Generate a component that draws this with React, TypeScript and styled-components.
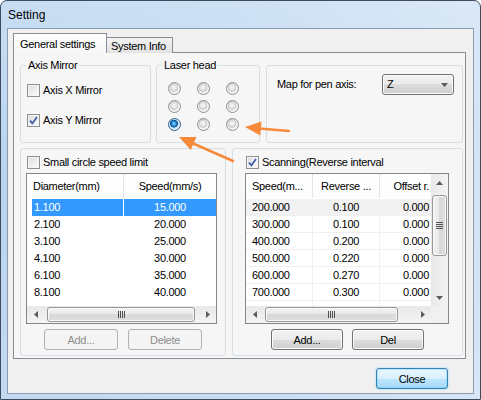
import React from 'react';
import styled, { createGlobalStyle, css } from 'styled-components';

const GlobalStyle = createGlobalStyle`
  html, body { margin: 0; padding: 0; background: #fff; }
  body {
    font-family: "Liberation Sans", Arial, sans-serif;
    font-size: 11px;
    letter-spacing: -0.3px;
    color: #000;
  }
  * { box-sizing: border-box; }
`;

const Screen = styled.div`
  position: relative;
  width: 481px;
  height: 400px;
  overflow: hidden;
`;

const Window = styled.div`
  width: 481px;
  height: 400px;
  border: 1px solid #3d4b5c;
  border-radius: 7px 7px 0 0;
  background:
    linear-gradient(to right, rgba(255,255,255,0) 0%, rgba(255,255,255,0.12) 50%, rgba(255,255,255,0.35) 100%),
    linear-gradient(#c7ddf3, #bad4ef 45%, #c3d9f1);
  display: flex;
  flex-direction: column;
`;

const TitleBar = styled.div`
  height: 27px;
  padding: 1px 0 0 7px;
  display: flex;
  align-items: center;
  font-size: 12px;
  letter-spacing: 0;
`;

const Client = styled.div`
  flex: 1;
  margin: 0 6px 5px 6px;
  border: 1px solid #8c9db1;
  background: #f0f0f0;
  padding: 4px 7px 0 5px;
  display: flex;
  flex-direction: column;
`;

const TabStrip = styled.div`
  height: 20px;
  display: flex;
  align-items: flex-end;
  position: relative;
  z-index: 1;
`;

const Tab = styled.div<{ $active?: boolean }>`
  border: 1px solid #898c95;
  border-bottom: none;
  display: flex;
  align-items: center;
  white-space: nowrap;
  ${p => p.$active
    ? css`
        width: 94px;
        height: 20px;
        padding: 0 0 0 6px;
        background: linear-gradient(#ffffff, #f6f6f6);
      `
    : css`
        width: 67px;
        height: 16px;
        margin-left: -1px;
        padding: 0 0 0 4px;
        background: linear-gradient(#f3f3f3, #e2e2e2);
      `}
`;

const Panel = styled.div`
  height: 307px;
  margin-top: -1px;
  border: 1px solid #898c95;
  background: #f6f6f6;
  padding: 6px 2px 0 6px;
  display: flex;
  flex-direction: column;
`;

const TopRow = styled.div`
  height: 84px;
  display: flex;
  gap: 5px;
`;

const GroupSet = styled.fieldset<{ $w: number }>`
  margin: 0;
  padding: 0;
  min-width: 0;
  width: ${p => p.$w}px;
  border: 1px solid #d5dfe5;
  border-radius: 3px;
`;

const Legend = styled.legend`
  margin-left: 5px;
  padding: 0 2px;
  line-height: 13px;
`;

const MirrorList = styled.div`
  display: flex;
  flex-direction: column;
  gap: 17px;
  padding: 12px 0 0 6px;
`;

const CheckRow = styled.label<{ $indent?: number }>`
  display: flex;
  align-items: center;
  gap: 3px;
  height: 13px;
  line-height: 13px;
  margin-left: ${p => p.$indent ?? 0}px;
  white-space: nowrap;
`;

const CheckBox = styled.span`
  width: 13px;
  height: 13px;
  flex: none;
  border: 1px solid #8e8f8f;
  background: linear-gradient(135deg, #d9dbde 0%, #eef0f2 60%, #fbfbfb 100%);
  box-shadow: inset 0 0 0 1px #f5f5f5;
  display: flex;
  align-items: center;
  justify-content: center;
`;

const RadioGrid = styled.div`
  display: grid;
  grid-template-columns: repeat(3, 13px);
  column-gap: 16px;
  row-gap: 5px;
  padding: 10px 0 0 11px;
`;

const Radio = styled.span<{ $on?: boolean }>`
  width: 13px;
  height: 13px;
  border-radius: 50%;
  border: 1px solid ${p => (p.$on ? '#2c628b' : '#8f8f8f')};
  background: ${p => p.$on
    ? 'radial-gradient(circle at 45% 42%, #9fdcff 0%, #2b98e6 22%, #0b4a86 42%, #cfe6f6 48%, #f4f9fd 100%)'
    : 'radial-gradient(circle at 45% 40%, #fafafa 0%, #e2e2e2 30%, #c6c6c6 46%, #eeeeee 50%, #ffffff 100%)'};
`;

const MapBox = styled.div`
  flex: 1;
  margin: 6px 0 0 1px;
  border: 1px solid #d5dfe5;
  border-radius: 3px;
  padding: 8px 8px 0 10px;
  display: flex;
  align-items: flex-start;
  justify-content: space-between;
  line-height: 21px;
`;

const Select = styled.div`
  width: 72px;
  height: 21px;
  border: 1px solid #707070;
  border-radius: 3px;
  background: linear-gradient(#f2f2f2, #ebebeb 50%, #dddddd 50%, #cfcfcf);
  box-shadow: inset 0 0 0 1px #fbfbfb;
  display: flex;
  align-items: center;
  justify-content: space-between;
  padding: 0 5px 0 4px;
`;

const BottomRow = styled.div`
  height: 208px;
  margin-top: 5px;
  display: flex;
  gap: 6px;
`;

const Group = styled.div<{ $w?: number }>`
  ${p => (p.$w ? css`width: ${p.$w}px;` : css`flex: 1;`)}
  border: 1px solid #d5dfe5;
  border-radius: 3px;
  padding-top: 7px;
  display: flex;
  flex-direction: column;
`;

const ListFrame = styled.div<{ $w: number; $ml: number; $grid?: boolean }>`
  width: ${p => p.$w}px;
  height: 151px;
  margin: 4px 0 0 ${p => p.$ml}px;
  border: 1px solid #828790;
  background: #fff;
  ${p => p.$grid
    ? css`
        display: grid;
        grid-template-columns: 1fr 17px;
        grid-template-rows: 1fr 17px;
      `
    : css`
        display: flex;
        flex-direction: column;
      `}
`;

const ListMain = styled.div`
  display: flex;
  flex-direction: column;
  min-width: 0;
  overflow: hidden;
`;

const Header = styled.div`
  height: 24px;
  flex: none;
  display: flex;
  background: linear-gradient(#ffffff, #fbfcfc);
`;

const HeadCell = styled.div<{ $w?: number; $align?: string; $pad?: string }>`
  ${p => (p.$w ? css`width: ${p.$w}px; flex: none;` : css`flex: 1;`)}
  text-align: ${p => p.$align ?? 'left'};
  padding: ${p => p.$pad ?? '0'};
  line-height: 24px;
  border-right: 1px solid #e5e5e5;
  white-space: nowrap;
  overflow: hidden;
  &:last-child { border-right: none; }
`;

const Rows = styled.div`
  flex: 1;
  padding-top: 1px;
  overflow: hidden;
`;

const SpeedRow = styled.div<{ $selected?: boolean }>`
  height: 17px;
  margin-left: 5px;
  display: flex;
  gap: 1px;
  line-height: 17px;
  color: ${p => (p.$selected ? '#fff' : '#000')};
  & > div { background: ${p => (p.$selected ? '#3399ff' : 'transparent')}; }
`;

const Cell = styled.div<{ $w?: number; $align?: string; $pad?: string }>`
  ${p => (p.$w ? css`width: ${p.$w}px; flex: none;` : css`flex: 1;`)}
  text-align: ${p => p.$align ?? 'left'};
  padding: ${p => p.$pad ?? '0'};
  white-space: nowrap;
`;

const ScanRow = styled.div<{ $hover?: boolean }>`
  height: 17px;
  display: flex;
  line-height: 16px;
  border-bottom: 1px solid #f0f0f0;
  background: ${p => (p.$hover ? '#f2f2f2' : '#fff')};
  & > div { border-right: 1px solid #f0f0f0; }
  & > div:last-child { border-right: none; }
`;

const HBar = styled.div`
  height: 17px;
  flex: none;
  display: flex;
  background: linear-gradient(#e8e8e8, #f4f4f4);
`;

const VBar = styled.div`
  display: flex;
  flex-direction: column;
  background: linear-gradient(to right, #e8e8e8, #f4f4f4);
`;

const ArrowBtn = styled.div`
  width: 17px;
  height: 17px;
  flex: none;
  display: flex;
  align-items: center;
  justify-content: center;
`;

const Track = styled.div<{ $vertical?: boolean }>`
  flex: 1;
  display: flex;
  flex-direction: ${p => (p.$vertical ? 'column' : 'row')};
`;

const Thumb = styled.div<{ $vertical?: boolean; $offset: number; $size: number }>`
  border: 1px solid #979797;
  border-radius: 3px;
  display: flex;
  align-items: center;
  justify-content: center;
  box-shadow: inset 0 0 0 1px #f9f9f9;
  ${p => p.$vertical
    ? css`
        margin: ${p.$offset}px 1px 0 1px;
        height: ${p.$size}px;
        background: linear-gradient(to right, #f3f3f3, #e8e8e8 50%, #d8d8d8 50%, #dedede);
      `
    : css`
        margin: 1px 0 1px ${p.$offset}px;
        width: ${p.$size}px;
        background: linear-gradient(#f3f3f3, #e8e8e8 50%, #d8d8d8 50%, #dedede);
      `}
`;

const Corner = styled.div`
  background: #f0f0f0;
`;

const ButtonRow = styled.div<{ $gap: number }>`
  display: flex;
  justify-content: center;
  gap: ${p => p.$gap}px;
  margin-top: 5px;
`;

const Button = styled.button<{ $w: number; $default?: boolean }>`
  width: ${p => p.$w}px;
  height: 21px;
  padding: 0;
  font-family: inherit;
  font-size: 11px;
  letter-spacing: -0.3px;
  color: #000;
  border: 1px solid #707070;
  border-radius: 3px;
  background: linear-gradient(#f2f2f2, #ebebeb 50%, #dddddd 50%, #cfcfcf);
  box-shadow: inset 0 0 0 1px #fcfcfc;
  &:disabled {
    color: #8d8d8d;
    border-color: #adb2b5;
    background: #f4f4f4;
    box-shadow: none;
  }
  ${p => p.$default && css`
    border-color: #3c7fb1;
    background: linear-gradient(#eaf6fd, #d9f0fc 50%, #bee6fd 50%, #a7d9f5);
    box-shadow: inset 0 0 0 1px #48d3fb55, 0 0 2px #7fd0f7;
  `}
`;

const Footer = styled.div`
  display: flex;
  justify-content: flex-end;
  padding-right: 18px;
  margin-top: 9px;
`;

const Overlay = styled.svg`
  position: absolute;
  left: 0;
  top: 0;
  pointer-events: none;
`;

const Tri = ({ dir }: { dir: 'left' | 'right' | 'up' | 'down' }) => {
  const pts = {
    left: '4,0 4,7 0,3.5',
    right: '0,0 0,7 4,3.5',
    up: '0,4 7,4 3.5,0',
    down: '0,0 7,0 3.5,4',
  }[dir];
  const w = dir === 'left' || dir === 'right' ? 4 : 7;
  const h = dir === 'left' || dir === 'right' ? 7 : 4;
  return (
    <svg width={w} height={h} viewBox={`0 0 ${w} ${h}`}>
      <polygon points={pts} fill="#5b5b5b" />
    </svg>
  );
};

const Grip = ({ vertical }: { vertical?: boolean }) =>
  vertical ? (
    <svg width="7" height="7" viewBox="0 0 7 7">
      {[0, 2, 4, 6].map(y => (
        <rect key={y} x="0" y={y} width="7" height="1" fill="#4f4f4f" />
      ))}
    </svg>
  ) : (
    <svg width="7" height="7" viewBox="0 0 7 7">
      {[0, 2, 4, 6].map(x => (
        <rect key={x} x={x} y="0" width="1" height="7" fill="#4f4f4f" />
      ))}
    </svg>
  );

const HScroll = ({ offset, size }: { offset: number; size: number }) => (
  <HBar>
    <ArrowBtn><Tri dir="left" /></ArrowBtn>
    <Track>
      <Thumb $offset={offset} $size={size}><Grip /></Thumb>
    </Track>
    <ArrowBtn><Tri dir="right" /></ArrowBtn>
  </HBar>
);

const VScroll = ({ offset, size }: { offset: number; size: number }) => (
  <VBar>
    <ArrowBtn><Tri dir="up" /></ArrowBtn>
    <Track $vertical>
      <Thumb $vertical $offset={offset} $size={size}><Grip vertical /></Thumb>
    </Track>
    <ArrowBtn><Tri dir="down" /></ArrowBtn>
  </VBar>
);

const Check = ({ checked }: { checked?: boolean }) => (
  <CheckBox>
    {checked && (
      <svg width="9" height="9" viewBox="0 0 9 9">
        <path d="M1 4.6 L3.4 7.4 L8 1" fill="none" stroke="#3d5aa3" strokeWidth="1.7" />
      </svg>
    )}
  </CheckBox>
);

const speeds = [
  ['1.100', '15.000'],
  ['2.100', '20.000'],
  ['3.100', '25.000'],
  ['4.100', '30.000'],
  ['6.100', '35.000'],
  ['8.100', '40.000'],
];

const scans = [
  ['200.000', '0.100', '0.000'],
  ['300.000', '0.100', '0.000'],
  ['400.000', '0.200', '0.000'],
  ['500.000', '0.220', '0.000'],
  ['600.000', '0.270', '0.000'],
  ['700.000', '0.300', '0.000'],
  ['', '', ''],
];

export default function App() {
  return (
    <>
      <GlobalStyle />
      <Screen>
        <Window>
          <TitleBar>Setting</TitleBar>
          <Client>
            <TabStrip>
              <Tab $active>General settings</Tab>
              <Tab>System Info</Tab>
            </TabStrip>
            <Panel>
              <TopRow>
                <GroupSet $w={131}>
                  <Legend>Axis Mirror</Legend>
                  <MirrorList>
                    <CheckRow><Check />Axis X Mirror</CheckRow>
                    <CheckRow><Check checked />Axis Y Mirror</CheckRow>
                  </MirrorList>
                </GroupSet>
                <GroupSet $w={104}>
                  <Legend>Laser head</Legend>
                  <RadioGrid>
                    {Array.from({ length: 9 }).map((_, i) => (
                      <Radio key={i} $on={i === 6} />
                    ))}
                  </RadioGrid>
                </GroupSet>
                <MapBox>
                  <span>Map for pen axis:</span>
                  <Select>
                    <span>Z</span>
                    <Tri dir="down" />
                  </Select>
                </MapBox>
              </TopRow>
              <BottomRow>
                <Group $w={206}>
                  <CheckRow $indent={6}><Check />Small circle speed limit</CheckRow>
                  <ListFrame $w={191} $ml={5}>
                    <Header>
                      <HeadCell $w={97} $pad="0 0 0 6px">Diameter(mm)</HeadCell>
                      <HeadCell $align="center">Speed(mm/s)</HeadCell>
                    </Header>
                    <Rows>
                      {speeds.map(([d, s], i) => (
                        <SpeedRow key={i} $selected={i === 0}>
                          <Cell $w={91} $pad="0 0 0 2px">{d}</Cell>
                          <Cell $align="center">{s}</Cell>
                        </SpeedRow>
                      ))}
                    </Rows>
                    <HScroll offset={3} size={148} />
                  </ListFrame>
                  <ButtonRow $gap={10}>
                    <Button $w={74} disabled>Add...</Button>
                    <Button $w={74} disabled>Delete</Button>
                  </ButtonRow>
                </Group>
                <Group>
                  <CheckRow $indent={13}><Check checked />Scanning(Reverse interval</CheckRow>
                  <ListFrame $w={204} $ml={12} $grid>
                    <ListMain>
                      <Header>
                        <HeadCell $w={67} $pad="0 0 0 6px">Speed(m...</HeadCell>
                        <HeadCell $w={67} $align="center">Reverse ...</HeadCell>
                        <HeadCell $align="right" $pad="0 2px 0 0">Offset r.</HeadCell>
                      </Header>
                      <Rows>
                        {scans.map(([a, b, c], i) => (
                          <ScanRow key={i} $hover={i === 0}>
                            <Cell $w={67} $pad="0 0 0 6px">{a}</Cell>
                            <Cell $w={67} $align="center">{b}</Cell>
                            <Cell $align="right" $pad="0 2px 0 0">{c}</Cell>
                          </ScanRow>
                        ))}
                      </Rows>
                    </ListMain>
                    <VScroll offset={4} size={61} />
                    <HScroll offset={2} size={133} />
                    <Corner />
                  </ListFrame>
                  <ButtonRow $gap={9}>
                    <Button $w={72}>Add...</Button>
                    <Button $w={72}>Del</Button>
                  </ButtonRow>
                </Group>
              </BottomRow>
            </Panel>
            <Footer>
              <Button $w={72} $default>Close</Button>
            </Footer>
          </Client>
        </Window>
        <Overlay width="481" height="400" viewBox="0 0 481 400">
          <line x1="233" y1="161" x2="192" y2="143" stroke="#f6893a" strokeWidth="2.5" strokeLinecap="round" />
          <polygon points="179,137 190.8,149.9 196.4,137.1" fill="#f6893a" />
          <line x1="289" y1="131" x2="259" y2="128.4" stroke="#f6893a" strokeWidth="2.5" strokeLinecap="round" />
          <polygon points="245,127 260.3,135.4 261.5,121.4" fill="#f6893a" />
        </Overlay>
      </Screen>
    </>
  );
}
